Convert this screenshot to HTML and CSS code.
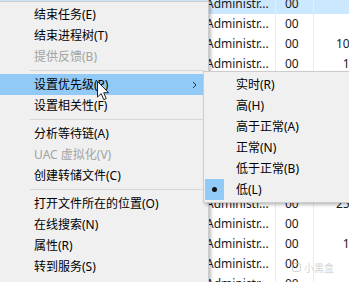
FILE: index.html
```html
<!DOCTYPE html>
<html lang="zh-CN">
<head>
    <meta charset="UTF-8">
    <title>任务管理器 - 菜单</title>
    <link rel="stylesheet" href="styles.css">
</head>
<body>
    <div class="table">
        <div class="row selected"><div class="cell"></div><div class="cell user">Administr...</div><div class="cell status">00</div><div class="cell mem"></div></div>
        <div class="row"><div class="cell"></div><div class="cell user">Administr...</div><div class="cell status">00</div><div class="cell mem"></div></div>
        <div class="row"><div class="cell"></div><div class="cell user">Administr...</div><div class="cell status">00</div><div class="cell mem">10,764 K</div></div>
        <div class="row"><div class="cell"></div><div class="cell user">Administr...</div><div class="cell status">00</div><div class="cell mem">1,216 K</div></div>
        <div class="row"><div class="cell"></div><div class="cell user">Administr...</div><div class="cell status">00</div><div class="cell mem"></div></div>
        <div class="row"><div class="cell"></div><div class="cell user">Administr...</div><div class="cell status">00</div><div class="cell mem"></div></div>
        <div class="row"><div class="cell"></div><div class="cell user">Administr...</div><div class="cell status">00</div><div class="cell mem"></div></div>
        <div class="row"><div class="cell"></div><div class="cell user">Administr...</div><div class="cell status">00</div><div class="cell mem"></div></div>
        <div class="row"><div class="cell"></div><div class="cell user">Administr...</div><div class="cell status">00</div><div class="cell mem"></div></div>
        <div class="row"><div class="cell"></div><div class="cell user">Administr...</div><div class="cell status">00</div><div class="cell mem"></div></div>
        <div class="row"><div class="cell"></div><div class="cell user">Administr...</div><div class="cell status">00</div><div class="cell mem">25,120 K</div></div>
        <div class="row"><div class="cell"></div><div class="cell user">Administr...</div><div class="cell status">00</div><div class="cell mem"></div></div>
        <div class="row"><div class="cell"></div><div class="cell user">Administr...</div><div class="cell status">00</div><div class="cell mem">1,532 K</div></div>
        <div class="row"><div class="cell"></div><div class="cell user">Administr...</div><div class="cell status">00</div><div class="cell mem"></div></div>
        <div class="row"><div class="cell"></div><div class="cell user">Administr...</div><div class="cell status">00</div><div class="cell mem"></div></div>
    </div>

    <div class="watermark">
        <svg width="9" height="9" viewBox="0 0 9 9"><rect x="0.5" y="0.5" width="8" height="8" rx="2" fill="none" stroke="currentColor"/></svg>
        小黑盒
    </div>

    <div class="menu main-menu">
        <div class="item">结束任务(E)</div>
        <div class="item">结束进程树(T)</div>
        <div class="item disabled">提供反馈(B)</div>
        <div class="sep"></div>
        <div class="item active">
            <span>设置优先级(P)</span>
            <svg class="arrow" width="5" height="8" viewBox="0 0 5 8"><path d="M1 1 L4 4 L1 7" fill="none" stroke="#333" stroke-width="1"/></svg>
        </div>
        <div class="item">设置相关性(F)</div>
        <div class="sep"></div>
        <div class="item">分析等待链(A)</div>
        <div class="item disabled">UAC 虚拟化(V)</div>
        <div class="item">创建转储文件(C)</div>
        <div class="sep"></div>
        <div class="item">打开文件所在的位置(O)</div>
        <div class="item">在线搜索(N)</div>
        <div class="item">属性(R)</div>
        <div class="item">转到服务(S)</div>
    </div>

    <div class="menu sub-menu">
        <div class="item">实时(R)</div>
        <div class="item">高(H)</div>
        <div class="item">高于正常(A)</div>
        <div class="item">正常(N)</div>
        <div class="item">低于正常(B)</div>
        <div class="item checked"><span class="check"><span class="dot"></span></span>低(L)</div>
    </div>

    <svg class="cursor" width="13" height="20" viewBox="0 0 13 20">
        <path d="M0.5 0.5 L0.5 16 L4.2 12.6 L6.8 18.6 L9.2 17.6 L6.7 11.7 L11.5 11.7 Z" fill="#fff" stroke="#222" stroke-width="1" stroke-linejoin="round"/>
    </svg>
</body>
</html>
```

FILE: styles.css
```css
body {
    margin: 0;
    width: 349px;
    height: 282px;
    overflow: hidden;
    position: relative;
    background: #fff;
    font-family: "Noto Sans", "Noto Sans CJK SC", sans-serif;
    font-size: 12px;
    color: #1a1a1a;
}
.table {
    margin-top: -6px;
    width: 400px;
}
.row {
    display: grid;
    grid-template-columns: 200px 75px 38px 77px;
    height: 20px;
    line-height: 20px;
}
.row.selected {
    background: #cce8ff;
}
.cell {
    white-space: nowrap;
    overflow: hidden;
}
.user {
    padding-left: 6px;
}
.status {
    border-left: 1px solid #ececec;
    padding-left: 9px;
}
.mem {
    border-left: 1px solid #ececec;
    text-align: right;
    padding-right: 6px;
}
.watermark {
    position: absolute;
    left: 292px;
    top: 260px;
    display: flex;
    align-items: center;
    gap: 3px;
    font-size: 10px;
    color: rgba(190, 190, 190, 0.7);
}
.menu {
    position: absolute;
    background: #f0f0f0;
    border: 1px solid #cccccc;
    box-shadow: 2px 2px 3px rgba(0, 0, 0, 0.25);
    color: #000;
}
.main-menu {
    left: -1px;
    top: 1px;
    width: 204px;
    padding: 2px 4px 10px 0;
}
.sub-menu {
    left: 203px;
    top: 71px;
    width: 160px;
    padding: 2px 0;
    z-index: 2;
}
.item {
    height: 21px;
    line-height: 21px;
    padding-left: 34px;
    display: flex;
    align-items: center;
    white-space: nowrap;
}
.sub-menu .item {
    padding-left: 32px;
}
.item.disabled {
    color: #a3a3a3;
}
.item.active {
    background: #91c9f7;
    justify-content: space-between;
}
.arrow {
    margin-right: 7px;
}
.sep {
    height: 1px;
    background: #d7d7d7;
    margin: 3px 0 3px 30px;
}
.item.checked {
    position: relative;
}
.check {
    position: absolute;
    left: 1px;
    top: 0;
    width: 19px;
    height: 21px;
    background: #91c9f7;
    display: flex;
    align-items: center;
    justify-content: center;
}
.dot {
    width: 5px;
    height: 5px;
    border-radius: 50%;
    background: #111;
}
.cursor {
    position: absolute;
    left: 97px;
    top: 81px;
    z-index: 3;
}
```
